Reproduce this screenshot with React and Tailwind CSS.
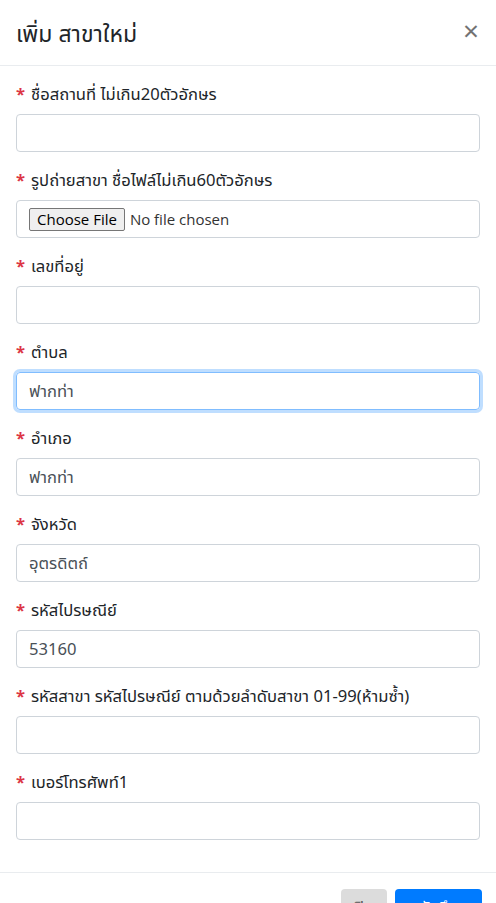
export default function App() {
  const fields = [
    { label: "ชื่อสถานที่ ไม่เกิน20ตัวอักษร", value: "" },
    { label: "รูปถ่ายสาขา ชื่อไฟล์ไม่เกิน60ตัวอักษร", file: true },
    { label: "เลขที่อยู่", value: "" },
    { label: "ตำบล", value: "ฟากท่า", focus: true },
    { label: "อำเภอ", value: "ฟากท่า" },
    { label: "จังหวัด", value: "อุตรดิตถ์" },
    { label: "รหัสไปรษณีย์", value: "53160" },
    { label: "รหัสสาขา รหัสไปรษณีย์ ตามด้วยลำดับสาขา 01-99(ห้ามซ้ำ)", value: "" },
    { label: "เบอร์โทรศัพท์1", value: "" },
  ];
  return (
    <div className="w-[496px] h-[903px] overflow-hidden bg-white text-[#212529] font-['Noto_Sans','Noto_Sans_Thai',Tahoma,sans-serif]">
      <div className="h-[66px] border-b border-[#e9ecef] flex items-center justify-between px-4">
        <h5 className="text-[23px] leading-[30px] font-normal mt-[1px]">เพิ่ม สาขาใหม่</h5>
        <span className="text-[28px] font-normal leading-none text-black opacity-55 mr-[1px] -mt-[6px]">×</span>
      </div>
      <div className="p-4 h-[806px]">
        {fields.map((f, i) => (
          <div key={i} className="mb-4">
            <div className="h-[24px] mb-2 text-[16.6px] leading-[24px] flex items-center">
              <span className="text-[#dc3545] font-bold mr-[6px]">*</span>
              <span>{f.label}</span>
            </div>
            {f.file ? (
              <div className="h-[38px] border border-[#ced4da] rounded-[4px] flex items-center pl-[12px]">
                <span className="h-[23px] px-[7px] flex items-center border border-[#767676] bg-[#efefef] rounded-[2px] text-[#000] text-[15px] font-['Open_Sans',sans-serif]">Choose File</span>
                <span className="ml-[5px] text-[#333] text-[15px] font-['Open_Sans',sans-serif]">No file chosen</span>
              </div>
            ) : (
              <div
                className={
                  f.focus
                    ? "h-[38px] border border-[#80bdff] rounded-[4px] shadow-[0_0_0_3px_rgba(0,123,255,0.25)] flex items-center px-3 text-[16.6px] text-[#495057]"
                    : "h-[38px] border border-[#ced4da] rounded-[4px] flex items-center px-3 text-[16.6px] text-[#495057]"
                }
              >
                {f.value}
              </div>
            )}
          </div>
        ))}
      </div>
      <div className="border-t border-[#e9ecef] flex justify-end gap-2 px-[14px] pt-4">
        <div className="h-[38px] w-[46px] rounded-[4px] bg-[#dcdcdc] text-[#555] text-[16px] flex justify-center pt-[6px]">ปิด</div>
        <div className="h-[38px] w-[87px] rounded-[4px] bg-[#007bff] text-white text-[16px] flex justify-center pt-[6px]">บันทึก</div>
      </div>
    </div>
  );
}
